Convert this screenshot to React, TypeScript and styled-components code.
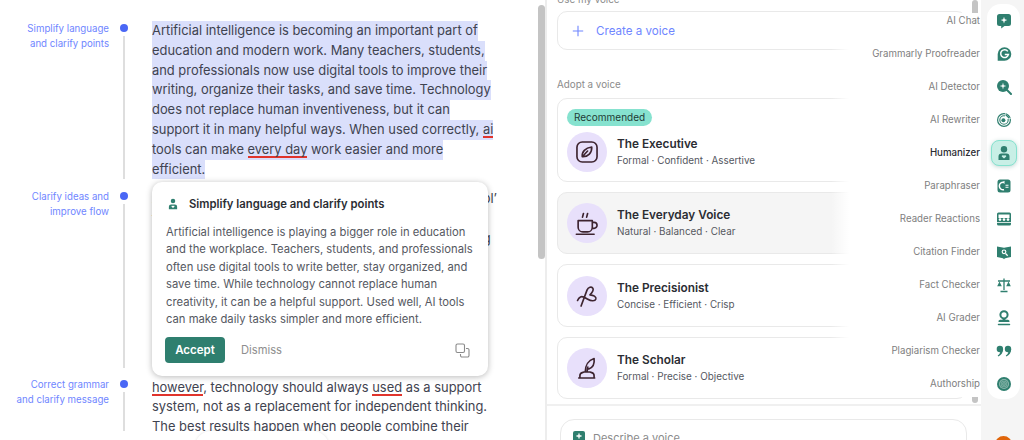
import React from "react";
import styled, { createGlobalStyle } from "styled-components";

const Global = createGlobalStyle`
  html, body { margin: 0; padding: 0; background: #fff; }
  body { font-family: "Inter", "Liberation Sans", sans-serif; }
  #root { width: 1024px; height: 440px; overflow: hidden; }
`;

const Page = styled.div`
  position: relative;
  width: 1024px;
  height: 440px;
  overflow: hidden;
  display: grid;
  grid-template-columns: 547px 434px 43px;
  background: #f5f5f5;
`;

const Editor = styled.div`
  position: relative;
  background: #fff;
  height: 440px;
  padding-top: 21px;
  box-sizing: border-box;
  border-right: 2px solid #ededed;
  overflow: hidden;
  display: flex;
  flex-direction: column;
  gap: 10px;
`;

const Section = styled.section<{ $h: number }>`
  display: grid;
  grid-template-columns: 109px 30px 1fr;
  position: relative;
  flex: none;
  height: ${(p) => p.$h}px;
`;

const Label = styled.div<{ $lift?: boolean }>`
  font-size: 9.7px;
  line-height: 15px;
  color: #6f86ff;
  text-align: right;
  margin-top: ${(p) => (p.$lift ? -1 : 0)}px;
`;

const Track = styled.div<{ $lift?: boolean }>`
  display: flex;
  flex-direction: column;
  align-items: center;
  gap: 4px;
  padding-top: ${(p) => (p.$lift ? 2 : 3)}px;
`;

const Dot = styled.span`
  width: 8px;
  height: 8px;
  border-radius: 50%;
  background: #4a67f5;
  flex: none;
`;

const Rule = styled.span`
  width: 2px;
  flex: 1;
  background: #dedede;
`;

const Prose = styled.div`
  padding-left: 13px;
  font-size: 12.9px;
  line-height: 19.8px;
  color: #3f4350;
  white-space: nowrap;
`;

const Line = styled.div<{ $mark?: boolean }>`
  width: fit-content;
  background: ${(p) => (p.$mark ? "#dadffb" : "transparent")};
`;

const Err = styled.span`
  box-shadow: inset 0 -2px 0 #e0342c;
  padding-bottom: 1px;
`;

const Card = styled.div`
  position: absolute;
  left: 152px;
  top: 182px;
  width: 336px;
  height: 194px;
  box-sizing: border-box;
  padding: 14px 14px 13px;
  background: #fff;
  border-radius: 10px;
  box-shadow: 0 1px 6px rgba(0, 0, 0, 0.28);
  display: flex;
  flex-direction: column;
`;

const CardHead = styled.div`
  display: flex;
  align-items: center;
  gap: 10px;
  padding-left: 1px;
  font-size: 11.3px;
  font-weight: 600;
  color: #2b2d33;
  height: 16px;
`;

const CardBody = styled.p`
  margin: 12px 0 0;
  font-size: 11.25px;
  line-height: 17.4px;
  color: #55585f;
  white-space: nowrap;
`;

const CardFoot = styled.div`
  margin-top: auto;
  display: flex;
  align-items: center;
  gap: 16px;
`;

const Accept = styled.button`
  width: 60px;
  height: 26px;
  margin-left: -1px;
  border: 0;
  border-radius: 4px;
  background: #2f7f6f;
  color: #fff;
  font: 600 11.5px "Inter", sans-serif;
  padding: 0;
`;

const Dismiss = styled.button`
  border: 0;
  background: none;
  padding: 0;
  color: #8e8e8e;
  font: 400 11.2px "Inter", sans-serif;
`;

const CopyBtn = styled.span`
  margin-left: auto;
  margin-right: 4px;
  display: flex;
`;

const BottomFade = styled.div`
  position: absolute;
  left: 0;
  right: 0;
  bottom: 0;
  height: 9px;
  background: #fff;
`;

const Pill = styled.div`
  position: absolute;
  left: 195px;
  top: 431px;
  width: 134px;
  height: 40px;
  border-radius: 16px;
  background: #fff;
  box-shadow: 0 0 3px rgba(0, 0, 0, 0.12);
`;

const Thumb = styled.span`
  position: absolute;
  left: 538px;
  top: 5px;
  width: 7px;
  height: 254px;
  border-radius: 4px;
  background: #c4c4c4;
`;

const Panel = styled.div`
  position: relative;
  background: #fff;
  height: 440px;
  overflow: hidden;
`;

const PanelScroll = styled.div`
  height: 406px;
  box-sizing: border-box;
  border-bottom: 2px solid #f0f0f0;
  padding: 0 14px 0 10px;
  display: flex;
  flex-direction: column;
  overflow: hidden;
`;

const Caption = styled.div`
  font-size: 9.8px;
  line-height: 14px;
  color: #8b8b8b;
`;

const TopCaption = styled(Caption)`
  margin-top: -7px;
`;

const CreateBox = styled.div`
  margin-top: 4px;
  height: 39px;
  box-sizing: border-box;
  border: 1px solid #e9e9e9;
  border-radius: 10px;
  display: flex;
  align-items: center;
  gap: 12px;
  padding-left: 14px;
  color: #6f86ff;
  font-size: 11.6px;
  flex: none;
`;

const AdoptCaption = styled(Caption)`
  margin-top: 28px;
  margin-bottom: 6px;
`;

const VoiceList = styled.div`
  display: flex;
  flex-direction: column;
  gap: 10px;
`;

const VoiceCard = styled.div<{ $hover?: boolean; $tall?: boolean }>`
  height: ${(p) => (p.$tall ? 83.5 : 62.5)}px;
  box-sizing: border-box;
  border: 1px solid #e9e9e9;
  border-radius: 10px;
  background: ${(p) => (p.$hover ? "#f5f5f5" : "#fff")};
  padding: ${(p) => (p.$tall ? "10px" : "10.5px")} 9px 0;
  flex: none;
`;

const Badge = styled.span`
  display: block;
  width: fit-content;
  height: 17px;
  line-height: 17px;
  padding: 0 7px;
  border-radius: 9px;
  background: #86e2cf;
  color: #1f3a35;
  font-size: 10px;
  margin-bottom: 6px;
`;

const VoiceRow = styled.div`
  display: flex;
  align-items: center;
  gap: 10px;
`;

const Avatar = styled.div`
  width: 40px;
  height: 40px;
  border-radius: 50%;
  background: #e8e0fb;
  display: flex;
  align-items: center;
  justify-content: center;
  flex: none;
`;

const VoiceName = styled.div`
  font-size: 11.8px;
  font-weight: 600;
  line-height: 16px;
  color: #2b2d33;
`;

const VoiceTags = styled.div`
  font-size: 9.9px;
  line-height: 16px;
  color: #55585f;
`;

const Describe = styled.div`
  margin: 13px 0 0 13px;
  width: 407px;
  height: 60px;
  box-sizing: border-box;
  border: 1px solid #e9e9e9;
  border-radius: 14px;
  display: flex;
  align-items: flex-start;
  gap: 8px;
  padding: 11px 0 0 12px;
  color: #8b8b8b;
  font-size: 11px;
  line-height: 14px;
`;

const PanelThumb = styled.span`
  position: absolute;
  right: 3px;
  top: 0;
  width: 6px;
  height: 403px;
  border-radius: 3px;
  background: #c4c4c4;
`;

const Dock = styled.div`
  position: absolute;
  right: 4px;
  top: 4px;
  display: flex;
  gap: 6px;
  height: 395px;
`;

const DockLabels = styled.div`
  width: 150px;
  margin: 9px 0 0;
  height: 384px;
  box-sizing: border-box;
  padding: 0 1px 0 24px;
  background: linear-gradient(to right, rgba(255,255,255,0), #fff 18px);
  display: flex;
  flex-direction: column;
`;

const DockLabel = styled.div<{ $on?: boolean }>`
  height: 33px;
  flex: none;
  line-height: 15px;
  font-size: 9.7px;
  text-align: right;
  white-space: nowrap;
  color: ${(p) => (p.$on ? "#2b2d33" : "#808080")};
  font-weight: ${(p) => (p.$on ? 500 : 400)};
`;

const DockRail = styled.div`
  width: 33px;
  height: 395px;
  background: #fff;
  border-radius: 14px;
  display: flex;
  flex-direction: column;
  align-items: center;
  box-sizing: border-box;
`;

const DockSlot = styled.div<{ $on?: boolean }>`
  width: 26px;
  height: 26px;
  flex: none;
  margin: 3.5px 0;
  box-sizing: border-box;
  display: flex;
  align-items: center;
  justify-content: center;
  border-radius: 8px;
  background: ${(p) => (p.$on ? "#c8efe6" : "transparent")};
  border: ${(p) => (p.$on ? "1px solid #86e2cf" : "0")};
  box-shadow: ${(p) => (p.$on ? "0 1px 4px rgba(47,127,111,.3)" : "none")};
`;

const Profile = styled.span`
  position: absolute;
  left: 995px;
  top: 436px;
  width: 17px;
  height: 17px;
  border-radius: 50%;
  background: #e0650a;
`;

const G = "#2f7f6f";
const Ink = "#3d2430";

const Ic = ({ children }: { children: React.ReactNode }) => (
  <svg width="16" height="16" viewBox="0 0 16 16">{children}</svg>
);

const railIcons: React.ReactNode[] = [
  <Ic key="chat"><path d="M3.500 1h9A2.500 2.500 0 0 1 15 3.500v7a2.500 2.500 0 0 1-2.500 2.500H8.500l-3.300 2.500V13H3.500A2.500 2.500 0 0 1 1 10.500v-7A2.500 2.500 0 0 1 3.500 1z" fill={G}/><path d="M8 3.800l.8 2.500 2.500.8-2.500.8L8 10.400l-.8-2.500-2.500-.8 2.500-.8z" fill="#fff"/></Ic>,
  <Ic key="g"><path d="M8.500 1.200a6.800 6.800 0 1 1 0 13.600H1.700V8a6.800 6.800 0 0 1 6.800-6.800z" fill={G}/><path d="M11.800 5.400A3.900 3.900 0 1 0 12.400 8.600H8.800" fill="none" stroke="#fff" strokeWidth="1.500"/></Ic>,
  <Ic key="det"><circle cx="7" cy="7" r="6" fill={G}/><path d="M11 11l4 4" stroke={G} strokeWidth="2" strokeLinecap="round"/><path d="M7 3.600l.7 2.700 2.700.7-2.700.7-.7 2.700-.7-2.700L3.600 7l2.700-.7z" fill="#fff"/></Ic>,
  <Ic key="rew"><circle cx="8" cy="8" r="6.400" fill="none" stroke={G} strokeWidth="1.200"/><circle cx="8" cy="8" r="4.200" fill="none" stroke={G} strokeWidth="1.100"/><circle cx="7.400" cy="8.200" r="2" fill={G}/><path d="M9 1v6h6" fill="#fff"/><path d="M9.600 2.600l3.800 3.600" stroke={G} strokeWidth="1.400"/></Ic>,
  <Ic key="hum"><circle cx="8" cy="4.200" r="3.200" fill={G}/><path d="M2.500 15v-3.500A3 3 0 0 1 5.500 8.500h5a3 3 0 0 1 3 3V15z" fill={G}/><path d="M8 13.600l-2-1.900c-.9-1 .6-2.200 2-1 1.400-1.200 2.900 0 2 1z" fill="#c8efe6"/></Ic>,
  <Ic key="par"><rect x="1.500" y="1.500" width="13" height="13" rx="2.500" fill={G}/><path d="M8 4.300a3.800 3.800 0 1 0 0 7.400" fill="none" stroke="#fff" strokeWidth="1.500"/><path d="M8.500 2.800l-2 1.600 2 1.600z" fill="#fff"/><path d="M9.500 7.300h3M9.500 9.300h3" stroke="#fff" strokeWidth="1.100"/></Ic>,
  <Ic key="rea"><rect x="1" y="1.500" width="14" height="13" rx="1.500" fill={G}/><rect x="2.500" y="3.500" width="11" height="3.500" fill="#fff"/><g fill="#fff"><circle cx="4" cy="8.600" r="1.300"/><circle cx="8" cy="8.600" r="1.300"/><circle cx="12" cy="8.600" r="1.300"/></g><path d="M1 11.500h14" stroke="#fff" strokeWidth="0.800"/></Ic>,
  <Ic key="cit"><path d="M1 2.500l7 1.200 7-1.200v10.500l-6 1.200-1 1-1-1-6-1.200z" fill={G}/><circle cx="8" cy="7.800" r="2.400" fill="#fff"/><circle cx="8" cy="7.800" r="1.200" fill={G}/><path d="M9.500 9.500l2.200 2.200" stroke="#fff" strokeWidth="1.300"/></Ic>,
  <Ic key="fact"><path d="M8 1.500v11.500M4.500 14.500h7M2 4h12" stroke={G} strokeWidth="1.300" fill="none"/><path d="M3.500 4.500L1.200 9.200h4.600zM12.500 4.500l-2.300 4.700h4.600z" fill={G}/></Ic>,
  <Ic key="grade"><circle cx="8" cy="4.800" r="3.600" fill="none" stroke={G} strokeWidth="2"/><path d="M6.600 8v1.800H4A1.800 1.800 0 0 0 2.500 12h11A1.800 1.800 0 0 0 12 9.800H9.400V8z" fill={G}/><path d="M2.500 14.500h11" stroke={G} strokeWidth="1.500" strokeLinecap="round"/></Ic>,
  <Ic key="quote"><circle cx="3.900" cy="6" r="3.200" fill={G}/><circle cx="12" cy="6" r="3.200" fill={G}/><path d="M7.100 6c0 3.600-2 6.300-4.800 7.500l-.6-1C3.200 11.600 4 10.300 4.200 9zM15.200 6c0 3.600-2 6.300-4.800 7.500l-.6-1c1.500-.9 2.300-2.200 2.500-3.500z" fill={G}/></Ic>,
  <Ic key="auth"><circle cx="8" cy="8" r="7" fill={G}/><circle cx="8" cy="8" r="5" fill="#8fb9af"/><circle cx="8" cy="8" r="3.700" fill="none" stroke={G} strokeWidth="0.700"/><circle cx="8" cy="8" r="2.200" fill="none" stroke={G} strokeWidth="0.700"/><circle cx="8" cy="8" r="0.800" fill={G}/></Ic>,
];

const railNames = ["AI Chat","Grammarly Proofreader","AI Detector","AI Rewriter","Humanizer","Paraphraser","Reader Reactions","Citation Finder","Fact Checker","AI Grader","Plagiarism Checker","Authorship"];

const Voice = ({ children }: { children: React.ReactNode }) => (
  <svg width="26" height="26" viewBox="0 0 22 22" fill="none" stroke={Ink} strokeWidth="1.400" strokeLinecap="round" strokeLinejoin="round">{children}</svg>
);

const voices = [
  { name: "The Executive", tags: "Formal · Confident · Assertive", tall: true, icon: <Voice><rect x="2.500" y="2.500" width="17" height="17" rx="4.500"/><path d="M7 15c-.5-4 2.500-7.500 8-8.200.3 4.700-3 8.500-8 8.200zM7 15l4.500-4.800"/></Voice> },
  { name: "The Everyday Voice", tags: "Natural · Balanced · Clear", hover: true, icon: <Voice><path d="M3.500 9h12v5.500a4 4 0 0 1-4 4h-4a4 4 0 0 1-4-4zM15.500 10.500h1.500a2 2 0 0 1 0 5h-1.700M2 20.500h15M8 3l-.8 3M11.500 3l-.8 3"/></Voice> },
  { name: "The Precisionist", tags: "Concise · Efficient · Crisp", icon: <Voice><path d="M6 19.500L11 6c1-2.500 4-3.500 5-1.500 1 2-1 4-2.500 5.500M13.500 10c3 .3 5.500 1.500 5 3.500-.6 2-4 2-6.800.3-2.200-1.300-4-3-6.200-2-1.300.6-2 1.700-2.500 3"/></Voice> },
  { name: "The Scholar", tags: "Formal · Precise · Objective", icon: <Voice><path d="M4 19.500h13.500M5 19.500v-2c0-1.300.8-2.200 2-2.600l1.500-.5h5l1.500.5c1.200.4 2 1.300 2 2.600v2M9.500 14.400c0-5.500 2.800-10 7.500-11.400.5 4-1 7.500-4.500 8.800M11 14.300l.7-4"/></Voice> },
];

export default function App() {
  return (
    <Page>
      <Global />
      <Editor>
        <Section $h={158.4}>
          <Label>Simplify language<br />and clarify points</Label>
          <Track><Dot /><Rule /></Track>
          <Prose>
            <Line $mark>Artificial intelligence is becoming an important part of</Line>
            <Line $mark>education and modern work. Many teachers, students,</Line>
            <Line $mark>and professionals now use digital tools to improve their</Line>
            <Line $mark>writing, organize their tasks, and save time. Technology</Line>
            <Line $mark>does not replace human inventiveness, but it can</Line>
            <Line $mark>support it in many helpful ways. When used correctly, <Err>ai</Err></Line>
            <Line $mark>tools can make <Err>every day</Err> work easier and more</Line>
            <Line $mark>efficient.</Line>
          </Prose>
        </Section>
        <Section $h={178.2}>
          <Label>Clarify ideas and<br />improve flow</Label>
          <Track><Dot /><Rule /></Track>
          <Prose>
            <Line>At the same time, students should learn to use each tool&rsquo;</Line>
            <Line>features with care and keep checking what they make,</Line>
            <Line>since good judgment still matters in revising and editing</Line>
          </Prose>
        </Section>
        <Section $h={70}>
          <Label $lift>Correct grammar<br />and clarify message</Label>
          <Track $lift><Dot /><Rule /></Track>
          <Prose>
            <Line><Err>however</Err>, technology should always <Err>used</Err> as a support</Line>
            <Line>system, not as a replacement for independent thinking.</Line>
            <Line>The best results happen when people combine their</Line>
          </Prose>
        </Section>
        <Thumb />
        <BottomFade />
        <Pill />
        <Card>
          <CardHead>
            <svg width="12" height="12" viewBox="0 0 16 16"><circle cx="8" cy="4" r="3" fill={G}/><path d="M2.500 15v-3.500A3 3 0 0 1 5.500 8.500h5a3 3 0 0 1 3 3V15z" fill={G}/><path d="M8 13.400l-1.800-1.700c-.8-.9.500-1.900 1.800-.9 1.300-1 2.600 0 1.800.9z" fill="#fff"/></svg>
            <span>Simplify language and clarify points</span>
          </CardHead>
          <CardBody>
            Artificial intelligence is playing a bigger role in education<br />
            and the workplace. Teachers, students, and professionals<br />
            often use digital tools to write better, stay organized, and<br />
            save time. While technology cannot replace human<br />
            creativity, it can be a helpful support. Used well, AI tools<br />
            can make daily tasks simpler and more efficient.
          </CardBody>
          <CardFoot>
            <Accept>Accept</Accept>
            <Dismiss>Dismiss</Dismiss>
            <CopyBtn>
              <svg width="15" height="15" viewBox="0 0 15 15" fill="none" stroke="#8a8a8a" strokeWidth="1.100"><rect x="1" y="1" width="8.500" height="8.500" rx="1.500"/><path d="M11 5.500h1.500a1.500 1.500 0 0 1 1.500 1.500v5.500a1.500 1.500 0 0 1-1.500 1.500H7a1.500 1.500 0 0 1-1.500-1.500V11"/></svg>
            </CopyBtn>
          </CardFoot>
        </Card>
      </Editor>
      <Panel>
        <PanelScroll>
          <TopCaption>Use my voice</TopCaption>
          <CreateBox>
            <svg width="12" height="12" viewBox="0 0 12 12" stroke="#6f86ff" strokeWidth="1.100"><path d="M6 .8v10.400M.8 6h10.400"/></svg>
            Create a voice
          </CreateBox>
          <AdoptCaption>Adopt a voice</AdoptCaption>
          <VoiceList>
            {voices.map((v) => (
              <VoiceCard key={v.name} $hover={v.hover} $tall={v.tall}>
                {v.tall && <Badge>Recommended</Badge>}
                <VoiceRow>
                  <Avatar>{v.icon}</Avatar>
                  <div>
                    <VoiceName>{v.name}</VoiceName>
                    <VoiceTags>{v.tags}</VoiceTags>
                  </div>
                </VoiceRow>
              </VoiceCard>
            ))}
          </VoiceList>
        </PanelScroll>
        <Describe>
          <svg width="12" height="12" viewBox="0 0 12 12"><rect width="12" height="12" rx="2" fill={G}/><path d="M6 2.500v5M3.500 5h5" stroke="#fff" strokeWidth="1.300"/></svg>
          Describe a voice
        </Describe>
        <PanelThumb />
      </Panel>
      <div />
      <Dock>
        <DockLabels>
          {railNames.map((n) => (
            <DockLabel key={n} $on={n === "Humanizer"}>{n}</DockLabel>
          ))}
        </DockLabels>
        <DockRail>
          {railIcons.map((ic, i) => (
            <DockSlot key={i} $on={i === 4}>{ic}</DockSlot>
          ))}
        </DockRail>
      </Dock>
      <Profile />
    </Page>
  );
}
